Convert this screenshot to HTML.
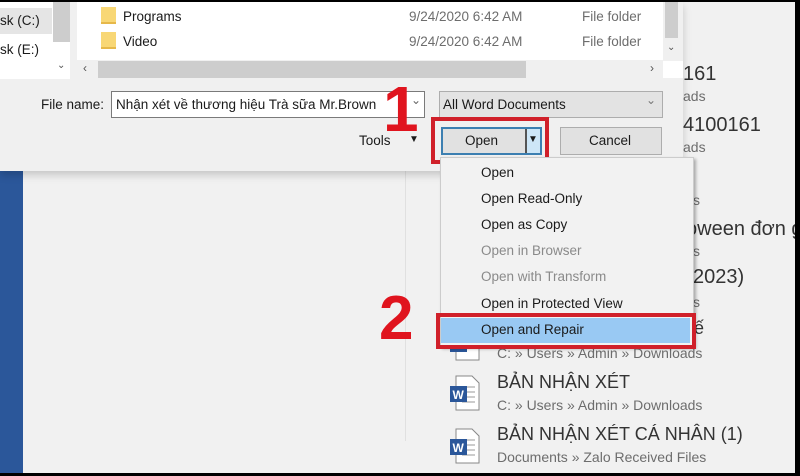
<!DOCTYPE html>
<html><head><meta charset="utf-8"><style>
*{margin:0;padding:0;box-sizing:border-box}
body{width:800px;height:476px;background:#000;position:relative;overflow:hidden;font-family:"Segoe UI","Liberation Sans","DejaVu Sans",sans-serif;font-size:13.5px;color:#1a1a1a}
.a{position:absolute}
.t{position:absolute;white-space:nowrap}
.g{color:#6d6d6d}
.mi{position:absolute;left:481px;white-space:nowrap;font-size:13.5px}
.dis{color:#8a8a8a}
.wi{position:absolute;width:34px;height:36px}
</style></head><body>
<div class="a" style="left:0;top:2px;width:795px;height:471px;background:#f1f1f1"></div>
<div class="t" style="left:683px;top:63px;font-size:20px;color:#333">161</div>
<div class="t g" style="left:683px;top:88px;font-size:14px">ads</div>
<div class="t" style="left:683px;top:114px;font-size:20px;color:#333">4100161</div>
<div class="t g" style="left:683px;top:139px;font-size:14px">ads</div>
<div class="t g" style="left:693px;top:192px;font-size:14px">s</div>
<div class="t" style="left:686px;top:218px;font-size:20px;color:#333">oween đơn gi</div>
<div class="t g" style="left:693px;top:243px;font-size:14px">s</div>
<div class="t" style="left:693px;top:266px;font-size:20px;color:#333">2023)</div>
<div class="t g" style="left:693px;top:294px;font-size:14px">s</div>
<div class="t" style="left:694px;top:318px;font-size:18px;color:#333">ế</div>
<div class="a" style="left:0;top:171px;width:23px;height:302px;background:#2b579a"></div>
<div class="a" style="left:405px;top:171px;width:1px;height:270px;background:#e0e0e0"></div>
<div class="a" style="left:0;top:2px;width:683px;height:169px;background:#f0f0f0;box-shadow:0 4px 8px rgba(0,0,0,.18)"></div>
<div class="a" style="left:0;top:2px;width:70px;height:77px;background:#fff"></div>
<div class="a" style="left:0;top:8px;width:52px;height:26px;background:#e5e5e5"></div>
<div class="t" style="left:0;top:13px">sk (C:)</div>
<div class="t" style="left:0;top:42px">sk (E:)</div>
<div class="a" style="left:53px;top:2px;width:17px;height:40px;background:#cdcdcd"></div>
<div class="t" style="left:57px;top:60px;font-size:10px;color:#555">&#8964;</div>
<div class="a" style="left:77px;top:2px;width:586px;height:58px;background:#fff"></div>
<div class="a" style="left:101px;top:7px;width:15px;height:17px;background:#f8d775;border-bottom:2px solid #e6b84a"></div>
<div class="a" style="left:101px;top:32px;width:15px;height:17px;background:#f8d775;border-bottom:2px solid #e6b84a"></div>
<div class="t" style="left:123px;top:9px">Programs</div>
<div class="t" style="left:123px;top:34px">Video</div>
<div class="t g" style="left:409px;top:9px">9/24/2020 6:42 AM</div>
<div class="t g" style="left:409px;top:34px">9/24/2020 6:42 AM</div>
<div class="t g" style="left:582px;top:9px">File folder</div>
<div class="t g" style="left:582px;top:34px">File folder</div>
<div class="a" style="left:663px;top:2px;width:17px;height:58px;background:#f0f0f0"></div>
<div class="a" style="left:665px;top:2px;width:13px;height:36px;background:#cdcdcd"></div>
<div class="t" style="left:667px;top:42px;font-size:10px;color:#555">&#8964;</div>
<div class="a" style="left:77px;top:61px;width:586px;height:17px;background:#f0f0f0"></div>
<div class="a" style="left:98px;top:61px;width:428px;height:17px;background:#cdcdcd"></div>
<div class="t" style="left:83px;top:61px;font-size:12px;color:#555">&#8249;</div>
<div class="t" style="left:650px;top:61px;font-size:12px;color:#555">&#8250;</div>
<div class="a" style="left:663px;top:61px;width:20px;height:17px;background:#fff"></div>
<div class="t" style="left:41px;top:97px">File name:</div>
<div class="a" style="left:111px;top:91px;width:314px;height:27px;background:#fff;border:1px solid #7a7a7a"></div>
<div class="t" style="left:116px;top:97px">Nhận xét về thương hiệu Trà sữa Mr.Brown</div>
<div class="t" style="left:411px;top:93px;font-size:12px;color:#666">&#8964;</div>
<div class="a" style="left:439px;top:91px;width:224px;height:27px;background:#e3e3e3;border:1px solid #adadad"></div>
<div class="t" style="left:443px;top:97px">All Word Documents</div>
<div class="t" style="left:646px;top:93px;font-size:12px;color:#777">&#8964;</div>
<div class="t" style="left:359px;top:133px">Tools</div>
<div class="t" style="left:409px;top:134px;font-size:10px">&#9660;</div>
<div class="a" style="left:441px;top:127px;width:101px;height:28px;background:#e1e1e1;border:2px solid #3c7fb1"></div>
<div class="a" style="left:525px;top:129px;width:15px;height:24px;background:#cde6f7;border-left:2px solid #555"></div>
<div class="t" style="left:528px;top:134px;font-size:10px">&#9660;</div>
<div class="t" style="left:465px;top:133px">Open</div>
<div class="a" style="left:560px;top:127px;width:102px;height:28px;background:#e1e1e1;border:1px solid #adadad"></div>
<div class="t" style="left:589px;top:133px">Cancel</div>
<div class="a" style="left:431px;top:117px;width:118px;height:47px;border:4px solid #d0202a"></div>
<div class="t" style="left:383px;top:72px;font-size:64px;font-weight:bold;color:#e0141e;font-family:'Liberation Sans',sans-serif">1</div>
<svg class="wi" style="left:448px;top:375px" viewBox="0 0 34 36"><path d="M8 1h16l7 7v27H8z" fill="#fff" stroke="#888"/><path d="M14 12h13M14 17h13M14 22h13M14 27h13" stroke="#999"/><rect x="2" y="11" width="17" height="16" fill="#2b579a"/><text x="4.5" y="24" font-size="12" font-weight="bold" fill="#fff" font-family="Liberation Sans">W</text></svg>
<svg class="wi" style="left:448px;top:428px" viewBox="0 0 34 36"><path d="M8 1h16l7 7v27H8z" fill="#fff" stroke="#888"/><path d="M14 12h13M14 17h13M14 22h13M14 27h13" stroke="#999"/><rect x="2" y="11" width="17" height="16" fill="#2b579a"/><text x="4.5" y="24" font-size="12" font-weight="bold" fill="#fff" font-family="Liberation Sans">W</text></svg>
<svg class="wi" style="left:448px;top:325px" viewBox="0 0 34 36"><path d="M8 1h16l7 7v27H8z" fill="#fff" stroke="#888"/><rect x="2" y="11" width="17" height="16" fill="#2b579a"/></svg>
<div class="t g" style="left:497px;top:345px;font-size:14px">C: » Users » Admin » Downloads</div>
<div class="t" style="left:497px;top:372px;font-size:18px;color:#333">BẢN NHẬN XÉT</div>
<div class="t g" style="left:497px;top:397px;font-size:14px">C: » Users » Admin » Downloads</div>
<div class="t" style="left:497px;top:424px;font-size:18px;color:#333">BẢN NHẬN XÉT CÁ NHÂN (1)</div>
<div class="t g" style="left:497px;top:449px;font-size:14px">Documents » Zalo Received Files</div>
<div class="a" style="left:440px;top:157px;width:254px;height:190px;background:#f2f2f2;border:1px solid #ccc;box-shadow:2px 2px 3px rgba(0,0,0,.3)"></div>
<div class="mi" style="top:165px">Open</div>
<div class="mi" style="top:191px">Open Read-Only</div>
<div class="mi" style="top:217px">Open as Copy</div>
<div class="mi dis" style="top:243px">Open in Browser</div>
<div class="mi dis" style="top:269px">Open with Transform</div>
<div class="mi" style="top:296px">Open in Protected View</div>
<div class="a" style="left:441px;top:318px;width:249px;height:25px;background:#99c9f3"></div>
<div class="mi" style="top:322px">Open and Repair</div>
<div class="a" style="left:436px;top:313px;width:260px;height:36px;border:4px solid #d0202a"></div>
<div class="t" style="left:379px;top:283px;font-size:62px;font-weight:bold;color:#e0141e;font-family:'Liberation Sans',sans-serif">2</div>
<!-- black frame -->
<div class="a" style="left:795px;top:0;width:5px;height:476px;background:#000"></div>
<div class="a" style="left:0;top:473px;width:800px;height:3px;background:#000"></div>
<div class="a" style="left:0;top:0;width:800px;height:2px;background:#000"></div>
</body></html>
